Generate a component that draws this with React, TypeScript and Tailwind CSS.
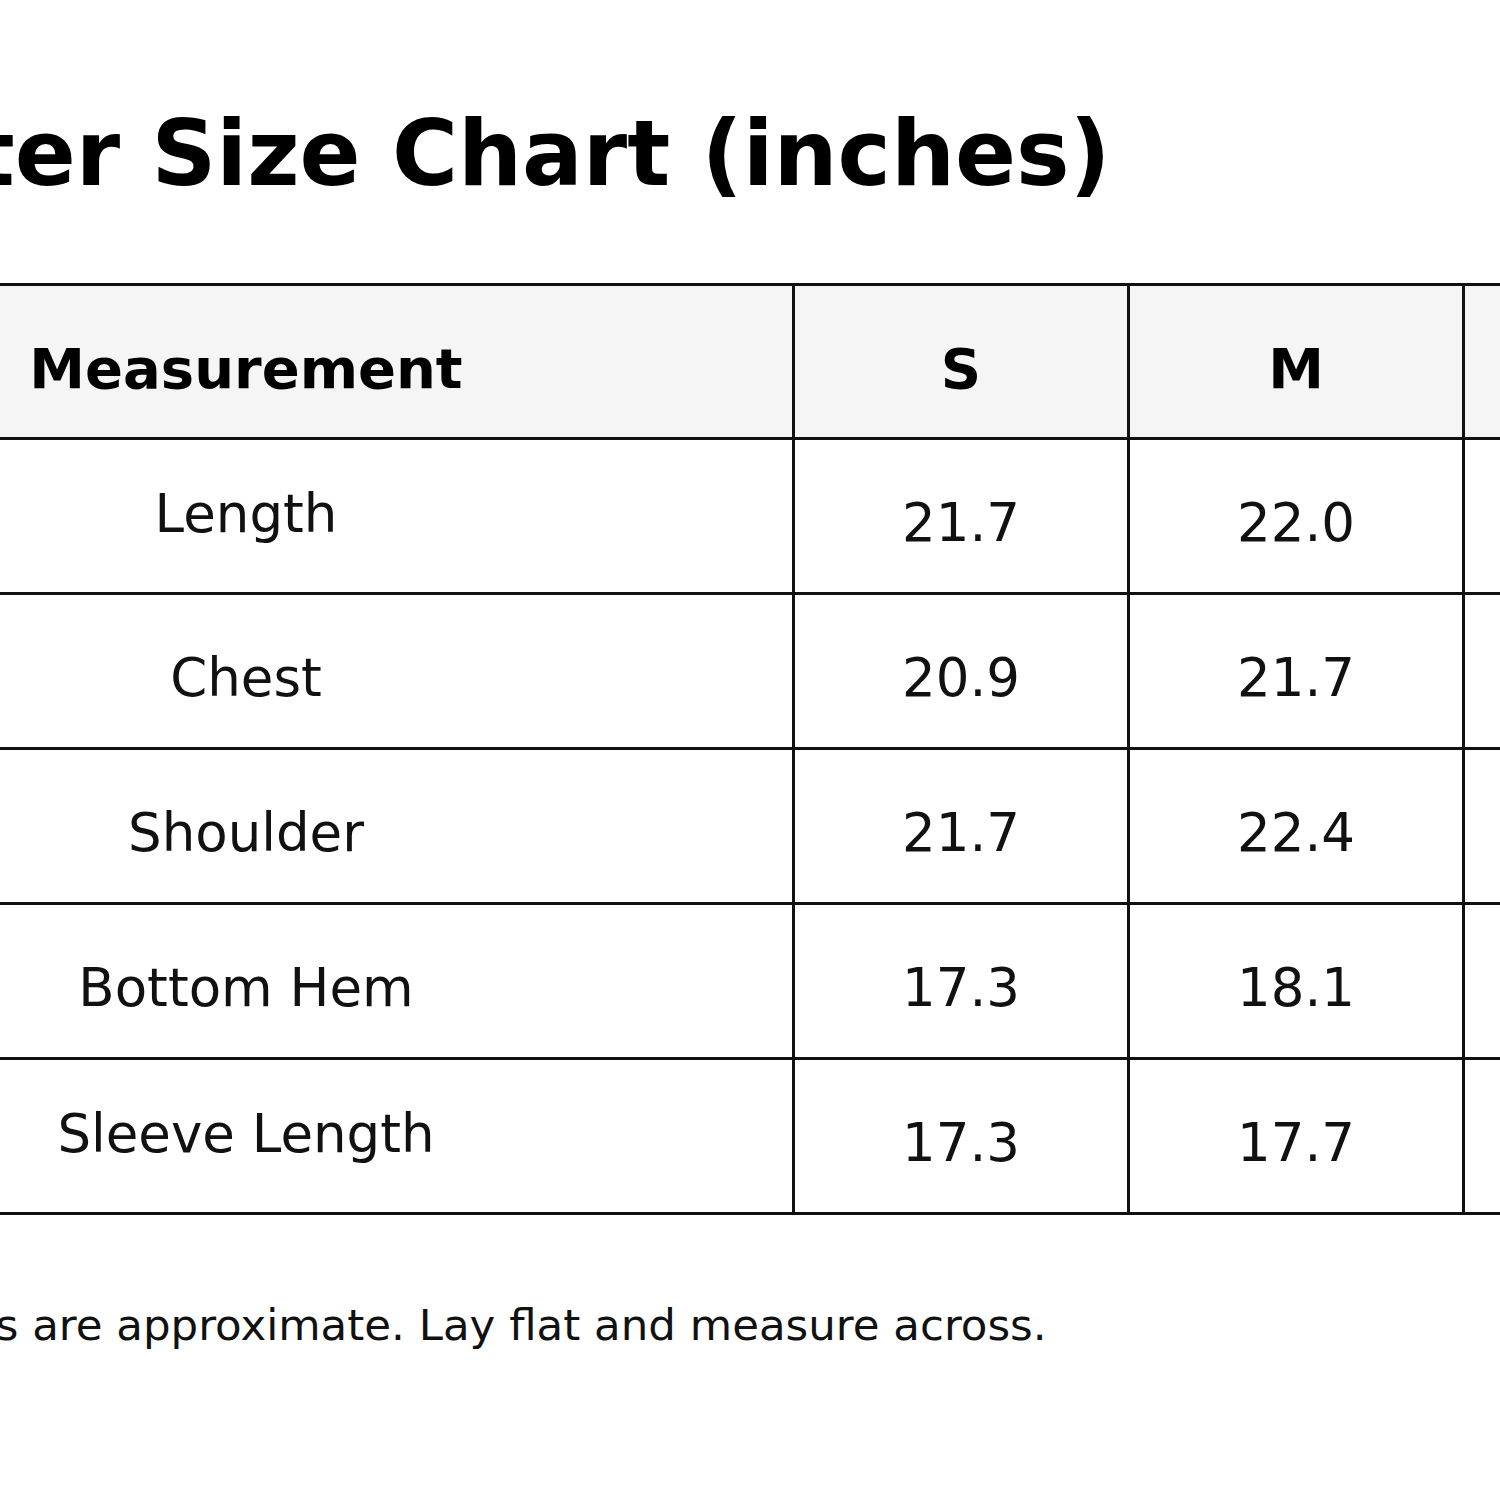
import React from "react";

type Row = { label: string; desc: boolean; values: string[] };

const sizes = ["S", "M", "L", "XL"];

const rows: Row[] = [
  { label: "Length", desc: true, values: ["21.7", "22.0", "22.4", "22.8"] },
  { label: "Chest", desc: false, values: ["20.9", "21.7", "22.4", "23.2"] },
  { label: "Shoulder", desc: false, values: ["21.7", "22.4", "23.2", "24.0"] },
  { label: "Bottom Hem", desc: false, values: ["17.3", "18.1", "18.9", "19.7"] },
  { label: "Sleeve Length", desc: true, values: ["17.3", "17.7", "18.1", "18.5"] },
];

export default function App() {
  return (
    <div className="w-[1500px] h-[1500px] overflow-hidden bg-white font-['DejaVu_Sans',sans-serif] text-[#111]">
      <div className="ml-[-303px] w-[2500px] pt-[109px]">
        <h1 className="pl-[5px] text-[90px] leading-none font-bold text-black whitespace-nowrap">
          Sweater Size Chart (inches)
        </h1>
        <div className="mt-[84px] grid grid-cols-[1095px_335px_335px_335px_335px] w-max border-t-[3px] border-l-[3px] border-[#111]">
          <div className="h-[154px] bg-[#f5f5f5] border-r-[3px] border-b-[3px] border-[#111] flex items-center justify-center pt-[14px] text-[56px] leading-none font-bold text-black">
            Measurement
          </div>
          {sizes.map((s) => (
            <div
              key={s}
              className="h-[154px] bg-[#f5f5f5] border-r-[3px] border-b-[3px] border-[#111] flex items-center justify-center pt-[14px] text-[56px] leading-none font-bold text-black"
            >
              {s}
            </div>
          ))}
          {rows.map((r) => (
            <React.Fragment key={r.label}>
              <div
                className={
                  r.desc
                    ? "h-[155px] border-r-[3px] border-b-[3px] border-[#111] flex items-center justify-center pb-[5px] text-[53px] leading-none whitespace-nowrap"
                    : "h-[155px] border-r-[3px] border-b-[3px] border-[#111] flex items-center justify-center pt-[13px] text-[53px] leading-none whitespace-nowrap"
                }
              >
                {r.label}
              </div>
              {r.values.map((v, i) => (
                <div
                  key={i}
                  className="h-[155px] border-r-[3px] border-b-[3px] border-[#111] flex items-center justify-center pt-[13px] text-[53px] leading-none"
                >
                  {v}
                </div>
              ))}
            </React.Fragment>
          ))}
        </div>
        <p className="mt-[89px] text-[43.5px] leading-none whitespace-nowrap text-[#111]">
          Measurements are approximate. Lay flat and measure across.
        </p>
      </div>
    </div>
  );
}
